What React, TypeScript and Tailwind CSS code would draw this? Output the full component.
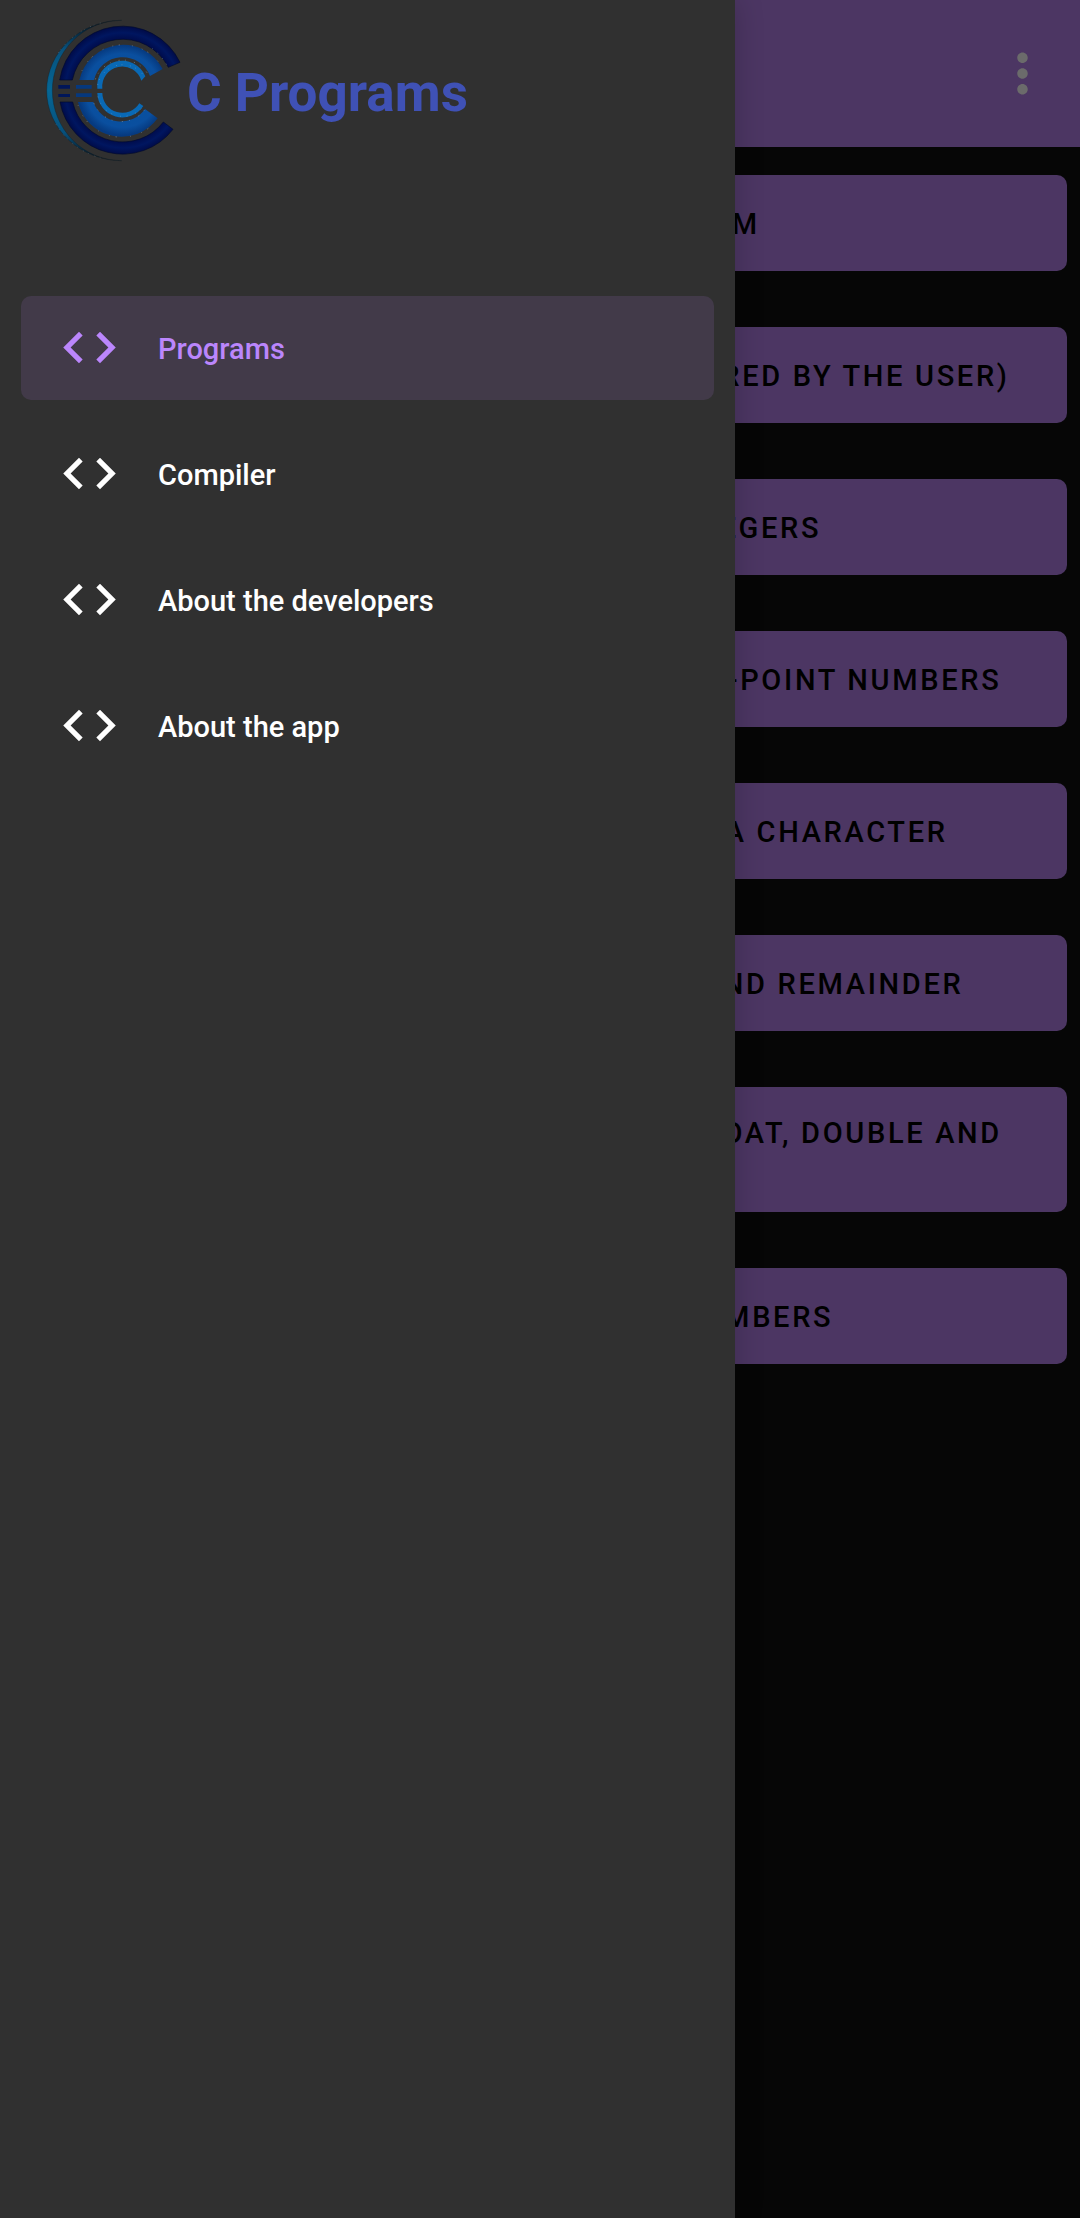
import React from "react";
import { MdCode, MdMoreVert } from "react-icons/md";

const programs = [
  "C Hello, World! Program",
  "C Program to print an integer (entered by the user)",
  "C Program to add two integers",
  "C Program to multiply two floating-point numbers",
  "C Program to find ASCII value of a character",
  "C Program to compute quotient and remainder",
  "C Program to find the size of int, float, double and char",
  "C Program to swap two numbers",
];

const menu = ["Programs", "Compiler", "About the developers", "About the app"];

function Logo() {
  return (
    <svg viewBox="45 54 411 432" className="h-36 w-[137px] shrink-0" aria-hidden="true">
      <defs>
        <radialGradient id="outer" gradientUnits="userSpaceOnUse" cx="278" cy="271" r="192">
          <stop offset="0.8" stopColor="#000c4c" />
          <stop offset="0.9" stopColor="#001660" />
          <stop offset="1" stopColor="#000b48" />
        </radialGradient>
        <radialGradient id="middle" gradientUnits="userSpaceOnUse" cx="278" cy="271" r="135">
          <stop offset="0.64" stopColor="#08509f" />
          <stop offset="0.82" stopColor="#0a4f9f" />
          <stop offset="1" stopColor="#063a80" />
        </radialGradient>
        <linearGradient id="crescent" x1="0" y1="0" x2="0" y2="1">
          <stop offset="0" stopColor="#0a0f14" />
          <stop offset="0.2" stopColor="#07507c" />
          <stop offset="0.5" stopColor="#056694" />
          <stop offset="0.8" stopColor="#07507c" />
          <stop offset="1" stopColor="#0a0f14" />
        </linearGradient>
      </defs>
      <path d="M275 61A225 210.5 0 0 0 275 482A208 210.5 0 0 1 275 61Z" fill="url(#crescent)" stroke="#0b1a24" strokeWidth="1" />
      <g fill="url(#outer)" stroke="#020a2c" strokeWidth="2">
        <path d="M89 240A191 191 0 0 1 450 187L415 202A154 154 0 0 0 127 240Z" />
        <path d="M90 306A191 191 0 0 0 429 388L400 366A154 154 0 0 1 128 306Z" />
      </g>
      <g fill="url(#middle)">
        <path d="M148 240A134 134 0 0 1 398 207L360 228A88 88 0 0 0 192 240Z" />
        <path d="M144 306A134 134 0 0 0 383 355L345 327A88 88 0 0 1 190 306Z" />
      </g>
      <g fill="#0969b5">
        <path d="M202 266A75 75 0 0 1 346 229L334 242A60 60 0 0 0 217 266Z" />
        <path d="M202 279A75 75 0 0 0 340 318L328 310A60 60 0 0 1 217 279Z" />
      </g>
      <g fill="#001659">
        <path d="M85 255h35v11H85zM85 282h35v9H85z" />
        <path d="M138 255h47v11h-47zM138 280h47v11h-47z" fill="#06387d" />
      </g>
      <g fill="none" stroke="#8fa3b5" strokeWidth="2">
        <path d="M156 212A136 136 0 0 1 398 205" strokeDasharray="2 29 2 17 3 37" />
        <path d="M144 315A136 136 0 0 0 383 357" strokeDasharray="2 33 2 19 3 41" />
        <path d="M196 238A88 88 0 0 1 358 230" strokeDasharray="3 17 2 25" />
        <path d="M192 310A88 88 0 0 0 345 328" strokeDasharray="3 19 2 29" />
        <path d="M203 255A77 77 0 0 1 342 228" strokeDasharray="2 15 2 23" />
        <path d="M204 290A77 77 0 0 0 340 319" strokeDasharray="2 18 2 25" />
        <path d="M212 69A225 210.5 0 0 0 78 170" strokeWidth="1" strokeDasharray="3 17 2 9" />
        <path d="M78 373A225 210.5 0 0 0 212 474" strokeWidth="1" strokeDasharray="3 14 2 19" />
        <path d="M366 145A154 154 0 0 1 413 200" strokeDasharray="2 19" />
      </g>
    </svg>
  );
}

export default function App() {
  return (
    <div className="relative min-h-screen bg-[#060606] font-['Roboto',sans-serif] text-[29px]">
      <header className="flex h-[147px] items-center justify-end bg-[#4c3663] pr-[26px]">
        <button type="button" aria-label="More options" className="text-[#6b6b6b]">
          <MdMoreVert size={63} />
        </button>
      </header>
      <main className="flex flex-col gap-14 px-[13px] py-7">
        {programs.map((name) => (
          <button
            key={name}
            type="button"
            className="min-h-24 rounded-[10px] bg-[#4c3663] px-10 pt-[29px] pb-7 text-center leading-[34px] font-medium tracking-[0.092em] text-black uppercase"
          >
            {name}
          </button>
        ))}
      </main>

      <aside className="absolute inset-y-0 left-0 w-[735px] max-w-full bg-[#303030] shadow-[0_0_28px_rgba(0,0,0,0.2)]">
        <div className="flex h-[275px] items-start pt-[18px] pl-[45px]">
          <Logo />
          <h1 className="pt-11 pl-[5px] text-[53px] leading-[62px] font-bold text-[#3f51b5]">C Programs</h1>
        </div>
        <nav className="flex flex-col gap-[22px] px-[21px] pt-[21px]">
          {menu.map((label, i) => (
            <a
              key={label}
              href="#"
              aria-current={i === 0 ? "page" : undefined}
              className={
                i === 0
                  ? "flex h-[104px] items-center gap-[37px] rounded-[10px] bg-[#423a49] px-[37px] pb-0.5 font-medium text-[#bb86fc]"
                  : "flex h-[104px] items-center gap-[37px] rounded-[10px] px-[37px] pb-0.5 font-medium text-white"
              }
            >
              <MdCode size={63} aria-hidden="true" />
              <span className="pt-1.5">{label}</span>
            </a>
          ))}
        </nav>
      </aside>
    </div>
  );
}
